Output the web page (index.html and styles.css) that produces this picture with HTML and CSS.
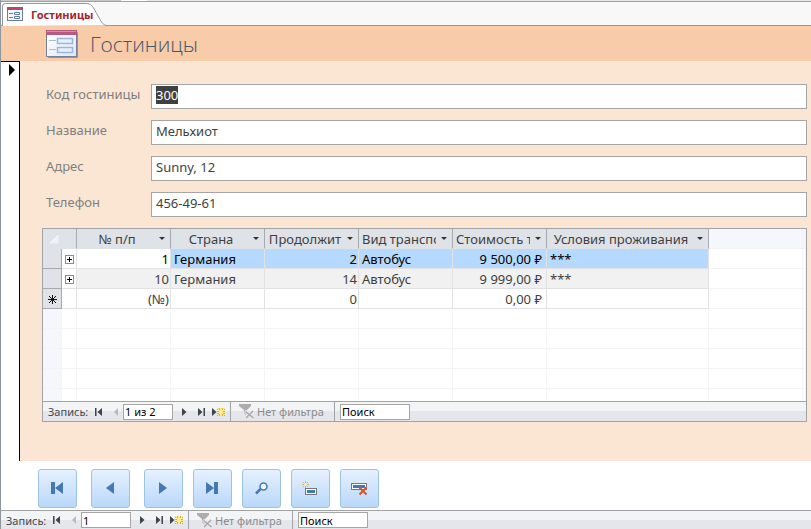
FILE: index.html
```html
<!DOCTYPE html>
<html lang="ru">
<head>
    <meta charset="UTF-8">
    <title>Гостиницы</title>
    <link rel="stylesheet" href="styles.css">
</head>
<body>

<svg class="defs" aria-hidden="true">
    <linearGradient id="paper" x2="1" y2="1">
        <stop offset="0" stop-color="#ffffff"/>
        <stop offset="1" stop-color="#dfe7f4"/>
    </linearGradient>
    <symbol id="ico-form" viewBox="0 0 32 28">
        <rect x="2" y="2" width="30" height="26" rx="1" fill="#000" opacity=".3"/>
        <rect x="0" y="0" width="31" height="27" rx="1" fill="#77809a"/>
        <rect x="1" y="5" width="29" height="21" fill="url(#paper)"/>
        <path d="M0 0h31v5h-31z" fill="#b85a80"/>
        <path d="M1 1h29v1h-29z" fill="#d68fab"/>
        <path d="M3 10.500h7M3 19.500h7" stroke="#a3bde3"/>
        <path d="M11.500 8.500h15v5h-15zM11.500 17.500h15v5h-15z" fill="#e9f0f9" stroke="#9ab6df" stroke-width="1.500"/>
    </symbol>
    <symbol id="ico-form-small" viewBox="0 0 16 14">
        <rect x=".5" y=".5" width="15" height="13" fill="#f4f7fc" stroke="#6b7c9e"/>
        <path d="M0 0h16v3H0z" fill="#b04a70"/>
        <path d="M2 6.500h4M2 10.500h4" stroke="#5f7fb0"/>
        <path d="M7.500 5.500h5v2h-5zM7.500 9.500h5v2h-5z" fill="#fff" stroke="#5f7fb0"/>
    </symbol>
    <symbol id="ico-first" viewBox="0 0 7 8"><path d="M0 0h1.500v8h-1.500zM7 0v8L2.500 4z"/></symbol>
    <symbol id="ico-prev" viewBox="0 0 7 8"><path d="M5 0v8L1 4z"/></symbol>
    <symbol id="ico-next" viewBox="0 0 7 8"><path d="M1 0v8L5.500 4z"/></symbol>
    <symbol id="ico-last" viewBox="0 0 7 8"><path d="M0 0v8L4.500 4zM5.500 0h1.500v8h-1.500z"/></symbol>
    <symbol id="ico-new" viewBox="0 0 13 8">
        <path d="M0 0v8L4.500 4z"/>
        <path d="M5 0h8v8h-8z" fill="#fbeb9c"/>
        <path d="M5 1h1v1h-1zM7 0h1v2h-1zM10 0h1v2h-1zM12 1h1v1h-1zM5 3h2v1h-2zM11 3h2v1h-2zM5 5h2v1h-2zM11 5h2v1h-2zM7 6h1v2h-1zM10 6h1v2h-1zM5 7h1v1h-1zM12 7h1v1h-1z" fill="#dfae1c"/>
    </symbol>
    <symbol id="ico-filter" viewBox="0 0 15 15">
        <path d="M0 0h12v2L8 6v6L5 9V6L0 2z" fill="#b0acae"/>
        <path d="M6 7l8 7M14 7l-8 7" stroke="#e9eaed" stroke-width="3"/>
        <path d="M6.500 7.500l8 6.500M14 7l-7 7" stroke="#aaa7a9" stroke-width="1.500"/>
    </symbol>
</svg>

<div class="window">
    <div class="ribbon-edge"></div>
    <div class="tabs">
        <svg class="tab-shape" width="108" height="26" viewBox="0 0 108 26" aria-hidden="true">
            <path d="M1.500 26V6q0-2.500 3-2.500H85c5 0 7 3 9 7l5 9c2 4 4 6 8 6" fill="#fff" stroke="#92989e"/>
        </svg>
        <a class="tab" href="#form">
            <svg width="16" height="14"><use href="#ico-form-small"/></svg>
            Гостиницы
        </a>
    </div>

    <div class="header">
        <svg width="32" height="28"><use href="#ico-form"/></svg>
        <h1>Гостиницы</h1>
    </div>

    <div class="detail" id="form">
        <div class="selector">
            <svg width="7" height="12" viewBox="0 0 7 12"><path d="M0 0v12l6-6z"/></svg>
        </div>
        <div class="fields">
            <div class="field">
                <label for="code">Код гостиницы</label>
                <input id="code" type="text" value="300">
            </div>
            <div class="field">
                <label for="name">Название</label>
                <input id="name" type="text" value="Мельхиот">
            </div>
            <div class="field">
                <label for="address">Адрес</label>
                <input id="address" type="text" value="Sunny, 12">
            </div>
            <div class="field">
                <label for="phone">Телефон</label>
                <input id="phone" type="text" value="456-49-61">
            </div>

            <div class="subform">
                <div class="sheet">
                    <table>
                        <colgroup>
                            <col class="col-sel"><col class="col-plus">
                            <col class="col"><col class="col"><col class="col"><col class="col"><col class="col">
                            <col class="col-wide"><col class="col"><col>
                        </colgroup>
                        <thead>
                            <tr>
                                <th colspan="2" class="corner"><svg width="12" height="11" viewBox="0 0 12 11"><path d="M12 0v11H0z" fill="#f0f3f6" stroke="#c5cfd8" stroke-width=".5"/></svg></th>
                                <th><div class="th"><span>№ п/п</span><i></i></div></th>
                                <th><div class="th"><span>Страна</span><i></i></div></th>
                                <th><div class="th"><span>Продолжит</span><i></i></div></th>
                                <th><div class="th"><span>Вид транспорта</span><i></i></div></th>
                                <th><div class="th"><span>Стоимость тура</span><i></i></div></th>
                                <th><div class="th"><span>Условия проживания</span><i></i></div></th>
                                <td></td><td></td>
                            </tr>
                        </thead>
                        <tbody>
                            <tr class="current">
                                <td class="sel"></td>
                                <td class="plus"><button type="button" aria-label="Развернуть"></button></td>
                                <td class="num key">1</td><td>Германия</td><td class="num">2</td><td>Автобус</td><td class="money">9 500,00 ₽</td><td>***</td>
                                <td class="out"></td><td class="out"></td>
                            </tr>
                            <tr class="alt">
                                <td class="sel"></td>
                                <td class="plus"><button type="button" aria-label="Развернуть"></button></td>
                                <td class="num">10</td><td>Германия</td><td class="num">14</td><td>Автобус</td><td class="money">9 999,00 ₽</td><td>***</td>
                                <td class="out"></td><td class="out"></td>
                            </tr>
                            <tr>
                                <td class="sel star"><svg width="9" height="9" viewBox="0 0 9 9"><path d="M4.500 0v9M0 4.500h9M1 1l7 7M8 1L1 8" stroke="#111"/></svg></td>
                                <td></td>
                                <td class="num">(№)</td><td></td><td class="num">0</td><td></td><td class="money">0,00 ₽</td><td></td>
                                <td class="out"></td><td class="out"></td>
                            </tr>
                            <tr class="blank"><td></td><td></td><td></td><td></td><td></td><td></td><td></td><td></td><td></td><td></td></tr>
                            <tr class="blank"><td></td><td></td><td></td><td></td><td></td><td></td><td></td><td></td><td></td><td></td></tr>
                            <tr class="blank"><td></td><td></td><td></td><td></td><td></td><td></td><td></td><td></td><td></td><td></td></tr>
                            <tr class="blank"><td></td><td></td><td></td><td></td><td></td><td></td><td></td><td></td><td></td><td></td></tr>
                            <tr class="blank"><td></td><td></td><td></td><td></td><td></td><td></td><td></td><td></td><td></td><td></td></tr>
                        </tbody>
                    </table>
                </div>
                <div class="recnav">
                    <label for="rec-inner">Запись:</label>
                    <button type="button" class="first" aria-label="Первая"><svg width="7" height="8"><use href="#ico-first"/></svg></button>
                    <button type="button" class="prev" aria-label="Предыдущая" disabled><svg width="7" height="8"><use href="#ico-prev"/></svg></button>
                    <input id="rec-inner" class="rec" type="text" value="1 из 2">
                    <button type="button" class="next" aria-label="Следующая"><svg width="7" height="8"><use href="#ico-next"/></svg></button>
                    <button type="button" class="last" aria-label="Последняя"><svg width="7" height="8"><use href="#ico-last"/></svg></button>
                    <button type="button" class="new" aria-label="Новая"><svg width="13" height="8"><use href="#ico-new"/></svg></button>
                    <button type="button" class="filter" disabled><svg width="15" height="15"><use href="#ico-filter"/></svg>Нет фильтра</button>
                    <input class="search" type="text" value="Поиск" aria-label="Поиск">
                </div>
            </div>
        </div>
    </div>

    <div class="footer">
        <div class="group wide">
            <button type="button" aria-label="Первая запись"><svg width="13" height="13" viewBox="0 0 13 13"><path d="M0 0h4v12H0zM12 0v12L4 6z" fill="#4579b2"/></svg></button>
            <button type="button" aria-label="Предыдущая запись"><svg width="13" height="13" viewBox="0 0 13 13"><path d="M10 0v12L2 6z" fill="#4579b2"/></svg></button>
            <button type="button" aria-label="Следующая запись"><svg width="13" height="13" viewBox="0 0 13 13"><path d="M2 0v12l8-6z" fill="#4579b2"/></svg></button>
        </div>
        <div class="group">
            <button type="button" aria-label="Последняя запись"><svg width="13" height="13" viewBox="0 0 13 13"><path d="M0 0v12l8-6zM8 0h4v12H8z" fill="#4579b2"/></svg></button>
            <button type="button" aria-label="Найти"><svg width="13" height="13" viewBox="0 0 13 13"><path d="M5.500 7L1 11.500" stroke="#4579b2" stroke-width="2.500"/><circle cx="8.500" cy="4.500" r="3.500" fill="#f3f8fd" stroke="#4579b2" stroke-width="1.500"/></svg></button>
            <button type="button" aria-label="Добавить запись"><svg width="17" height="17" viewBox="0 0 17 17"><rect x="3.500" y="8.500" width="11" height="6" fill="#fff" stroke="#777"/><path d="M5 10h8v3H5z" fill="#4579b2"/><path d="M3.500 1v7M0 4.500h7M1 2l5 5M6 2L1 7" stroke="#e8b25a"/><circle cx="3.500" cy="4.500" r="1.500" fill="#fff3cf"/></svg></button>
            <button type="button" aria-label="Удалить запись"><svg width="17" height="15" viewBox="0 0 17 15"><rect x=".5" y="2.500" width="15" height="6" fill="#fff" stroke="#777"/><path d="M2 4h12v3H2z" fill="#4579b2"/><path d="M8.500 6.500l7 7M15.500 6.500l-7 7" stroke="#d9532c" stroke-width="2"/></svg></button>
        </div>
    </div>

    <div class="recnav outer">
        <label for="rec-outer">Запись:</label>
        <button type="button" class="first" aria-label="Первая"><svg width="7" height="8"><use href="#ico-first"/></svg></button>
        <button type="button" class="prev" aria-label="Предыдущая" disabled><svg width="7" height="8"><use href="#ico-prev"/></svg></button>
        <input id="rec-outer" class="rec" type="text" value="1">
        <button type="button" class="next" aria-label="Следующая"><svg width="7" height="8"><use href="#ico-next"/></svg></button>
        <button type="button" class="last" aria-label="Последняя"><svg width="7" height="8"><use href="#ico-last"/></svg></button>
        <button type="button" class="new" aria-label="Новая"><svg width="13" height="8"><use href="#ico-new"/></svg></button>
        <button type="button" class="filter" disabled><svg width="15" height="15"><use href="#ico-filter"/></svg>Нет фильтра</button>
        <input class="search" type="text" value="Поиск" aria-label="Поиск">
    </div>
</div>

<script>
    var code = document.getElementById('code');
    code.focus();
    code.select();
</script>

</body>
</html>
```
FILE: styles.css
```css
* {
    box-sizing: border-box;
}

body {
    margin: 0;
    font-family: "Noto Sans", "Open Sans", sans-serif;
    font-size: 13px;
    color: #3f3f3f;
    background-color: white;
}

button, input {
    font: inherit;
    color: inherit;
    padding: 0;
    margin: 0;
    border: 0;
    background: none;
}

svg {
    display: block;
    flex: none;
}

.defs {
    position: absolute;
    width: 0;
    height: 0;
}

.window {
    min-height: 100vh;
    display: flex;
    flex-direction: column;
    border-left: 1px solid #8f959d;
}

/* tabs */
.ribbon-edge {
    height: 1px;
    background: linear-gradient(to right, #c8c8c8 120px, white 120px, white 146px, #e6e6e6 146px);
}

.tabs {
    position: relative;
    height: 25px;
    border-top: 1px solid #a0a3a6;
    border-bottom: 1px solid #92989e;
    background-color: #f8f8f8;
}

.tab-shape {
    position: absolute;
    left: 0;
    top: -2px;
}

.tab {
    position: relative;
    display: flex;
    align-items: center;
    gap: 8px;
    height: 24px;
    padding-left: 6px;
    font-size: 11px;
    font-weight: bold;
    color: #a4262c;
    text-decoration: none;
}

/* form header */
.header {
    display: flex;
    align-items: center;
    gap: 12px;
    height: 35px;
    padding-left: 45px;
    background-color: #f8cba9;
}

.header h1 {
    margin: 0;
    font-size: 21px;
    line-height: 30px;
    font-weight: 300;
    font-family: "Open Sans", "Noto Sans", sans-serif;
    color: #44546a;
}

/* detail */
.detail {
    flex: 1;
    display: flex;
    background-color: #fbe6d4;
}

.selector {
    width: 19px;
    padding: 2px 0 0 8px;
    border-top: 1px solid black;
    border-right: 1px solid black;
    background-color: white;
}

.fields {
    flex: 1;
    min-width: 0;
    padding: 23px 4px 39px 22px;
}

.field {
    display: flex;
    align-items: flex-start;
    margin: 0 0 11px 4px;
}

.field label {
    width: 105px;
    line-height: 20px;
    color: #7f7f7f;
}

.field input {
    flex: 1;
    min-width: 0;
    height: 25px;
    padding: 0 4px 3px;
    border: 1px solid #a6a6a6;
    background-color: white;
    outline: none;
}

.field input::selection {
    color: white;
    background-color: #404040;
}

/* datasheet */
.subform {
    border: 1px solid #a0a3a8;
}

.sheet {
    height: 172px;
    overflow: hidden;
    background-color: white;
}

table {
    width: 100%;
    table-layout: fixed;
    border-collapse: separate;
    border-spacing: 0;
}

.col-sel {
    width: 19px;
}

.col-plus {
    width: 15px;
}

.col {
    width: 94px;
}

.col-wide {
    width: 162px;
}

th, td {
    height: 20px;
    padding: 1px 3px 0;
    line-height: 18px;
    white-space: nowrap;
    overflow: hidden;
    border-right: 1px solid #e2e2e4;
    border-bottom: 1px solid #e2e2e4;
}

th {
    padding: 0;
    font-weight: normal;
    background-color: #dfe3e8;
    border-right-color: #a7abb0;
    border-bottom-color: #dfe3e8;
}

thead td {
    background-color: #f6f7fd;
    border-color: #f1f1f6;
}

.corner svg {
    margin-left: 4px;
}

.th {
    display: flex;
    align-items: center;
    padding: 0 5px 0 3px;
}

.th span {
    flex: 1;
    overflow: hidden;
}

.th i {
    flex: none;
    margin-left: 5px;
    border: 3px solid transparent;
    border-top-color: #333;
    border-bottom: 0;
}

.num {
    text-align: right;
    padding-right: 1px;
}

.money {
    text-align: right;
    padding-right: 4px;
}

.current td {
    color: black;
    background-color: #b5d9ff;
}

.alt td {
    background-color: #f1f1f1;
}

tr td.plus, tr td.key {
    background-color: white;
}

tr td.sel {
    background-color: #dfe3e8;
    border-color: #a7abb0;
}

.star {
    padding-left: 5px;
}

tr td.out, .blank td {
    background-color: white;
    border-color: #f4f4f6;
}

.blank td:first-child {
    background-color: #f6f7fd;
}

.plus button {
    display: block;
    width: 9px;
    height: 9px;
    border: 1px solid #8c8c8c;
    background:
        linear-gradient(black, black) center / 5px 1px no-repeat,
        linear-gradient(black, black) center / 1px 5px no-repeat,
        white;
}

/* record navigation */
.recnav {
    display: flex;
    align-items: center;
    height: 20px;
    padding-left: 5px;
    font-size: 11px;
    line-height: 15px;
    color: #44484f;
    border-top: 1px solid #a0a3a8;
    background: linear-gradient(#f3f4f6 50%, #e4e6eb 50%);
}

.outer {
    height: 19px;
}

.recnav label {
    width: 47px;
}

.recnav button {
    display: flex;
    align-items: center;
    fill: #3f434a;
}

.recnav button:disabled {
    color: #8b8b8b;
    fill: #b9bbc0;
}

.recnav .prev {
    margin: 0 3px 0 11px;
}

.recnav .rec {
    width: 50px;
    height: 16px;
    padding: 0 1px;
    color: black;
    border: 1px solid #a6a6a6;
    background-color: white;
}

.recnav .next {
    margin: 0 10px 0 8px;
}

.recnav .new {
    margin: 0 5px 0 7px;
}

.recnav .filter {
    gap: 3px;
    width: 105px;
    height: 100%;
    padding-left: 8px;
    white-space: nowrap;
    border-left: 1px solid #a0a3a8;
    border-right: 1px solid #a0a3a8;
}

.recnav .search {
    width: 70px;
    height: 16px;
    margin-left: 5px;
    padding: 0 1px;
    color: black;
    border: 1px solid #a6a6a6;
    background-color: white;
}

/* form footer */
.footer {
    display: flex;
    gap: 10px;
    padding: 8px 0 2px 37px;
}

.group {
    display: flex;
    gap: 10px;
}

.wide {
    gap: 14px;
}

.footer button {
    display: flex;
    align-items: center;
    justify-content: center;
    width: 39px;
    height: 39px;
    border: 1px solid #9cc2e5;
    border-radius: 3px;
    background: linear-gradient(#e6f1fe, #b9d8fa);
}
```
